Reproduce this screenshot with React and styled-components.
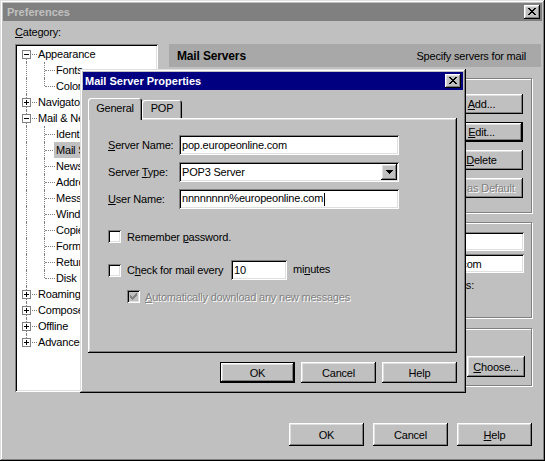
import React from 'react';
import styled, { createGlobalStyle, css } from 'styled-components';

const GlobalStyle = createGlobalStyle`
  html, body { margin: 0; padding: 0; background: #c0c0c0; }
  body {
    font-family: "Liberation Sans", Arial, sans-serif;
    font-size: 11px;
    letter-spacing: -0.2px;
    color: #000;
  }
`;

const frameBevel = css`
  box-shadow: inset -1px -1px #000, inset 1px 1px #dfdfdf, inset -2px -2px #808080, inset 2px 2px #fff;
`;

const buttonBevel = css`
  box-shadow: inset -1px -1px #000, inset 1px 1px #fff, inset -2px -2px #808080, inset 2px 2px #dfdfdf;
`;

const sunken = css`
  box-shadow: inset 1px 1px #808080, inset -1px -1px #fff, inset 2px 2px #000, inset -2px -2px #dfdfdf;
`;

const Window = styled.div`
  position: relative;
  box-sizing: border-box;
  width: 545px;
  height: 461px;
  padding: 3px;
  background: #c0c0c0;
  ${frameBevel}
  display: flex;
  flex-direction: column;
`;

const TitleBar = styled.div`
  height: 18px;
  flex-shrink: 0;
  display: flex;
  align-items: center;
  justify-content: space-between;
  padding: 0 2px 0 ${(p) => (p.$active ? 2 : 4)}px;
  background: ${(p) => (p.$active ? '#000080' : '#808080')};
  color: ${(p) => (p.$active ? '#fff' : '#c0c0c0')};
  font-weight: bold;
  letter-spacing: 0;
`;

const CloseButton = styled.span`
  box-sizing: border-box;
  width: 16px;
  height: 14px;
  background: #c0c0c0;
  ${buttonBevel}
  display: flex;
  align-items: center;
  justify-content: center;
  padding: 0 1px 1px 0;
`;

const Body = styled.div`
  flex: 1;
  display: flex;
  flex-direction: column;
  padding: 5px 1px 0 12px;
`;

const Main = styled.div`
  display: flex;
  gap: 11px;
  align-items: flex-start;
`;

const LeftCol = styled.div`
  width: 143px;
  flex-shrink: 0;
  display: flex;
  flex-direction: column;
`;

const Caption = styled.div`
  line-height: 13px;
  height: 13px;
  margin-bottom: 5px;
`;

const TreeBox = styled.div`
  box-sizing: border-box;
  height: 348px;
  padding: 2px;
  background: #fff;
  ${sunken}
  overflow: hidden;
`;

const TreeRow = styled.div`
  display: flex;
  height: 16px;
  white-space: nowrap;
`;

const TreeCell = styled.span`
  position: relative;
  flex: 0 0 18px;
  height: 16px;
  box-sizing: border-box;
  padding: 4px 0 0 5px;
  &::before {
    content: '';
    display: ${(p) => (p.$v ? 'block' : 'none')};
    position: absolute;
    left: 9px;
    top: ${(p) => (p.$v === 'bottom' ? '8px' : '0')};
    height: ${(p) => (p.$v === 'full' ? '16px' : '8px')};
    border-left: 1px dotted #808080;
  }
  &::after {
    content: '';
    display: ${(p) => (p.$h ? 'block' : 'none')};
    position: absolute;
    left: 10px;
    right: -2px;
    top: 8px;
    border-top: 1px dotted #808080;
  }
`;

const Expander = styled.span`
  position: relative;
  z-index: 1;
  display: block;
  box-sizing: border-box;
  width: 9px;
  height: 9px;
  border: 1px solid #808080;
  background: #fff;
  &::before {
    content: '';
    position: absolute;
    left: 1px;
    top: 3px;
    width: 5px;
    height: 1px;
    background: #000;
  }
  &::after {
    content: '';
    display: ${(p) => (p.$plus ? 'block' : 'none')};
    position: absolute;
    left: 3px;
    top: 1px;
    width: 1px;
    height: 5px;
    background: #000;
  }
`;

const TreeLabel = styled.span`
  position: relative;
  z-index: 1;
  margin-left: 1px;
  padding: 0 2px;
  line-height: 16px;
  background: ${(p) => (p.$selected ? '#c0c0c0' : 'transparent')};
`;

const RightCol = styled.div`
  flex: 1;
  display: flex;
  flex-direction: column;
  padding-top: 18px;
`;

const Header = styled.div`
  height: 23px;
  display: flex;
  align-items: center;
  justify-content: space-between;
  padding: 0 15px 0 8px;
  background: #a8a8a8;
`;

const HeaderTitle = styled.span`
  font-weight: bold;
  font-size: 12px;
  letter-spacing: -0.15px;
`;

const Group = styled.div`
  box-sizing: border-box;
  height: ${(p) => p.$h}px;
  margin-top: ${(p) => p.$mt}px;
  margin-right: 9px;
  border: 1px solid #808080;
  box-shadow: inset 1px 1px #fff, 1px 1px #fff;
  display: flex;
`;

const ServerList = styled.div`
  flex: 1;
  margin: 16px 10px 12px 10px;
  background: #fff;
  ${sunken}
  padding: 3px 4px;
`;

const ButtonColumn = styled.div`
  display: flex;
  flex-direction: column;
  gap: 8px;
  padding: 15px 8px 0 0;
`;

const FieldColumn = styled.div`
  flex: 1;
  display: flex;
  flex-direction: column;
  align-items: flex-end;
  padding: 9px 7px 0 0;
`;

const NoteText = styled.div`
  margin: 6px 50px 0 0;
  line-height: 13px;
  white-space: nowrap;
`;

const ChooseRow = styled.div`
  flex: 1;
  display: flex;
  justify-content: flex-end;
  align-items: flex-start;
  padding: 27px 6px 0 0;
`;

const Button = styled.button`
  box-sizing: border-box;
  width: ${(p) => p.$w || 75}px;
  height: ${(p) => p.$h || 21}px;
  padding: 0;
  font: inherit;
  letter-spacing: inherit;
  color: #000;
  background: #c0c0c0;
  border: ${(p) => (p.$default ? '1px solid #000' : 'none')};
  ${buttonBevel}
  ${(p) =>
    p.disabled &&
    css`
      color: #808080;
      text-shadow: 1px 1px 0 #fff;
    `}
`;

const Footer = styled.div`
  display: flex;
  justify-content: flex-end;
  gap: 9px;
  margin-top: 31px;
  padding-right: 9px;
`;

const Field = styled.div`
  box-sizing: border-box;
  width: ${(p) => p.$w}px;
  height: ${(p) => p.$h || 20}px;
  flex-shrink: 0;
  padding: 0 2px 0 3px;
  background: #fff;
  ${sunken}
  display: flex;
  align-items: center;
  white-space: nowrap;
  overflow: hidden;
  & + & {
    margin-top: 3px;
  }
`;

const FieldValue = styled.span`
  flex: 1;
`;

const Caret = styled.span`
  display: inline-block;
  width: 1px;
  height: 13px;
  margin-left: 1px;
  background: #000;
  vertical-align: middle;
`;

const ArrowButton = styled.span`
  box-sizing: border-box;
  width: 16px;
  height: 16px;
  flex-shrink: 0;
  background: #c0c0c0;
  ${buttonBevel}
  display: flex;
  align-items: center;
  justify-content: center;
`;

/* modal dialog */

const Dialog = styled.div`
  position: absolute;
  z-index: 10;
  left: 80px;
  top: 69px;
  box-sizing: border-box;
  width: 386px;
  height: 324px;
  padding: 3px;
  background: #c0c0c0;
  ${frameBevel}
  display: flex;
  flex-direction: column;
`;

const DialogBody = styled.div`
  flex: 1;
  display: flex;
  flex-direction: column;
  padding: 8px 6px 0 5px;
`;

const TabStrip = styled.div`
  display: flex;
  align-items: flex-end;
  height: 20px;
`;

const Tab = styled.div`
  position: relative;
  z-index: ${(p) => (p.$selected ? 1 : 0)};
  box-sizing: border-box;
  width: ${(p) => p.$w}px;
  height: ${(p) => (p.$selected ? 22 : 18)}px;
  margin-bottom: ${(p) => (p.$selected ? -2 : 0)}px;
  padding-top: ${(p) => (p.$selected ? 4 : 2)}px;
  text-align: center;
  background: #c0c0c0;
  border-radius: 3px 3px 0 0;
  box-shadow: inset 1px 1px #fff, inset -1px 0 #000, inset -2px 0 #808080;
`;

const TabPanel = styled.div`
  box-sizing: border-box;
  height: 235px;
  padding: 17px 0 0 20px;
  background: #c0c0c0;
  ${buttonBevel}
`;

const FormGrid = styled.div`
  display: grid;
  grid-template-columns: 71px 220px;
  grid-auto-rows: 20px;
  row-gap: 7px;
  align-items: center;
`;

const CheckRow = styled.div`
  display: flex;
  align-items: center;
  height: ${(p) => p.$h || 13}px;
  margin-top: ${(p) => p.$mt}px;
  padding-left: ${(p) => p.$indent || 0}px;
  white-space: nowrap;
`;

const CheckBox = styled.span`
  box-sizing: border-box;
  width: 13px;
  height: 13px;
  flex-shrink: 0;
  margin-right: ${(p) => (p.$disabled ? 5 : 6)}px;
  background: ${(p) => (p.$disabled ? '#c0c0c0' : '#fff')};
  ${sunken}
  display: flex;
  align-items: center;
  justify-content: center;
`;

const CheckText = styled.span`
  width: ${(p) => (p.$w ? `${p.$w}px` : 'auto')};
  ${(p) =>
    p.$disabled &&
    css`
      color: #808080;
      text-shadow: 1px 1px 0 #fff;
    `}
`;

const Unit = styled.span`
  margin: -2px 0 0 6px;
`;

const DialogButtons = styled.div`
  display: flex;
  justify-content: flex-end;
  gap: 6px;
  margin-top: 9px;
`;

const CloseGlyph = () => (
  <svg width="8" height="7" viewBox="0 0 8 7" shapeRendering="crispEdges">
    <path
      fill="#000"
      d="M0 0h2v1H0zM6 0h2v1H6zM1 1h2v1H1zM5 1h2v1H5zM2 2h4v1H2zM3 3h2v1H3zM2 4h4v1H2zM1 5h2v1H1zM5 5h2v1H5zM0 6h2v1H0zM6 6h2v1H6z"
    />
  </svg>
);

const DownGlyph = () => (
  <svg width="7" height="4" viewBox="0 0 7 4" shapeRendering="crispEdges">
    <path fill="#000" d="M0 0h7v1H0zM1 1h5v1H1zM2 2h3v1H2zM3 3h1v1H3z" />
  </svg>
);

const CheckGlyph = ({ color }) => (
  <svg width="7" height="7" viewBox="0 0 7 7" shapeRendering="crispEdges">
    <path
      fill={color}
      d="M6 0h1v1H6zM5 1h2v1H5zM0 2h1v1H0zM4 2h3v1H4zM0 3h2v1H0zM3 3h3v1H3zM0 4h5v1H0zM1 5h3v1H1zM2 6h1v1H2z"
    />
  </svg>
);

const treeRows = [
  { label: 'Appearance', box: 'minus', root: 'bottom' },
  { label: 'Fonts', level: 1, branch: 'full' },
  { label: 'Colors', level: 1, branch: 'top' },
  { label: 'Navigator', box: 'plus', root: 'full' },
  { label: 'Mail & Newsgroups', box: 'minus', root: 'full' },
  { label: 'Identity', level: 1, branch: 'full' },
  { label: 'Mail Servers', level: 1, branch: 'full', selected: true },
  { label: 'Newsgroup Servers', level: 1, branch: 'full' },
  { label: 'Addressing', level: 1, branch: 'full' },
  { label: 'Messages', level: 1, branch: 'full' },
  { label: 'Window Settings', level: 1, branch: 'full' },
  { label: 'Copies & Folders', level: 1, branch: 'full' },
  { label: 'Formatting', level: 1, branch: 'full' },
  { label: 'Return Receipts', level: 1, branch: 'full' },
  { label: 'Disk Space', level: 1, branch: 'top' },
  { label: 'Roaming Access', box: 'plus', root: 'full' },
  { label: 'Composer', box: 'plus', root: 'full' },
  { label: 'Offline', box: 'plus', root: 'full' },
  { label: 'Advanced', box: 'plus', root: 'top' },
];

const CategoryTree = () => (
  <TreeBox>
    {treeRows.map((r) => (
      <TreeRow key={r.label}>
        {r.level === 1 ? (
          <>
            <TreeCell $v="full" />
            <TreeCell $v={r.branch} $h />
          </>
        ) : (
          <TreeCell $v={r.root} $h>
            <Expander $plus={r.box === 'plus'} />
          </TreeCell>
        )}
        <TreeLabel $selected={r.selected}>{r.label}</TreeLabel>
      </TreeRow>
    ))}
  </TreeBox>
);

const MailServerDialog = () => (
  <Dialog>
    <TitleBar $active>
      <span>Mail Server Properties</span>
      <CloseButton>
        <CloseGlyph />
      </CloseButton>
    </TitleBar>
    <DialogBody>
      <TabStrip>
        <Tab $selected $w={54}>General</Tab>
        <Tab $w={40}>POP</Tab>
      </TabStrip>
      <TabPanel>
        <FormGrid>
          <span>
            <u>S</u>erver Name:
          </span>
          <Field $w={220}>pop.europeonline.com</Field>
          <span>
            Server <u>T</u>ype:
          </span>
          <Field $w={220}>
            <FieldValue>POP3 Server</FieldValue>
            <ArrowButton>
              <DownGlyph />
            </ArrowButton>
          </Field>
          <span>
            <u>U</u>ser Name:
          </span>
          <Field $w={220}>
            <FieldValue>
              nnnnnnnn%europeonline.com
              <Caret />
            </FieldValue>
          </Field>
        </FormGrid>
        <CheckRow $mt={21}>
          <CheckBox />
          <span>
            Remember <u>p</u>assword.
          </span>
        </CheckRow>
        <CheckRow $mt={17} $h={20}>
          <CheckBox />
          <CheckText $w={104}>
            C<u>h</u>eck for mail every
          </CheckText>
          <Field $w={56}>10</Field>
          <Unit>
            mi<u>n</u>utes
          </Unit>
        </CheckRow>
        <CheckRow $mt={10} $indent={19}>
          <CheckBox $disabled>
            <CheckGlyph color="#808080" />
          </CheckBox>
          <CheckText $disabled>
            <u>A</u>utomatically download any new messages
          </CheckText>
        </CheckRow>
      </TabPanel>
      <DialogButtons>
        <Button $default>OK</Button>
        <Button>Cancel</Button>
        <Button>Help</Button>
      </DialogButtons>
    </DialogBody>
  </Dialog>
);

export default function App() {
  return (
    <>
      <GlobalStyle />
      <Window>
        <TitleBar>
          <span>Preferences</span>
          <CloseButton>
            <CloseGlyph />
          </CloseButton>
        </TitleBar>
        <Body>
          <Main>
            <LeftCol>
              <Caption>
                <u>C</u>ategory:
              </Caption>
              <CategoryTree />
            </LeftCol>
            <RightCol>
              <Header>
                <HeaderTitle>Mail Servers</HeaderTitle>
                <span>Specify servers for mail</span>
              </Header>
              <Group $h={135} $mt={11}>
                <ServerList>pop.europeonline.com</ServerList>
                <ButtonColumn>
                  <Button $w={83} $h={20}>
                    <u>A</u>dd...
                  </Button>
                  <Button $w={83} $h={20} $default>
                    <u>E</u>dit...
                  </Button>
                  <Button $w={83} $h={20}>
                    <u>D</u>elete
                  </Button>
                  <Button $w={83} $h={20} disabled>
                    Set as Default
                  </Button>
                </ButtonColumn>
              </Group>
              <Group $h={96} $mt={9}>
                <FieldColumn>
                  <Field $w={198} $h={19} />
                  <Field $w={188} $h={19}>
                    nnnnnnnn@europeonline.com
                  </Field>
                  <NoteText>Use Secure Socket Layer (SSL) or TLS for secure messages:</NoteText>
                </FieldColumn>
              </Group>
              <Group $h={58} $mt={10}>
                <ChooseRow>
                  <Button $w={58}>
                    <u>C</u>hoose...
                  </Button>
                </ChooseRow>
              </Group>
            </RightCol>
          </Main>
          <Footer>
            <Button $h={23}>OK</Button>
            <Button $h={23}>Cancel</Button>
            <Button $h={23}>
              <u>H</u>elp
            </Button>
          </Footer>
        </Body>
        <MailServerDialog />
      </Window>
    </>
  );
}
